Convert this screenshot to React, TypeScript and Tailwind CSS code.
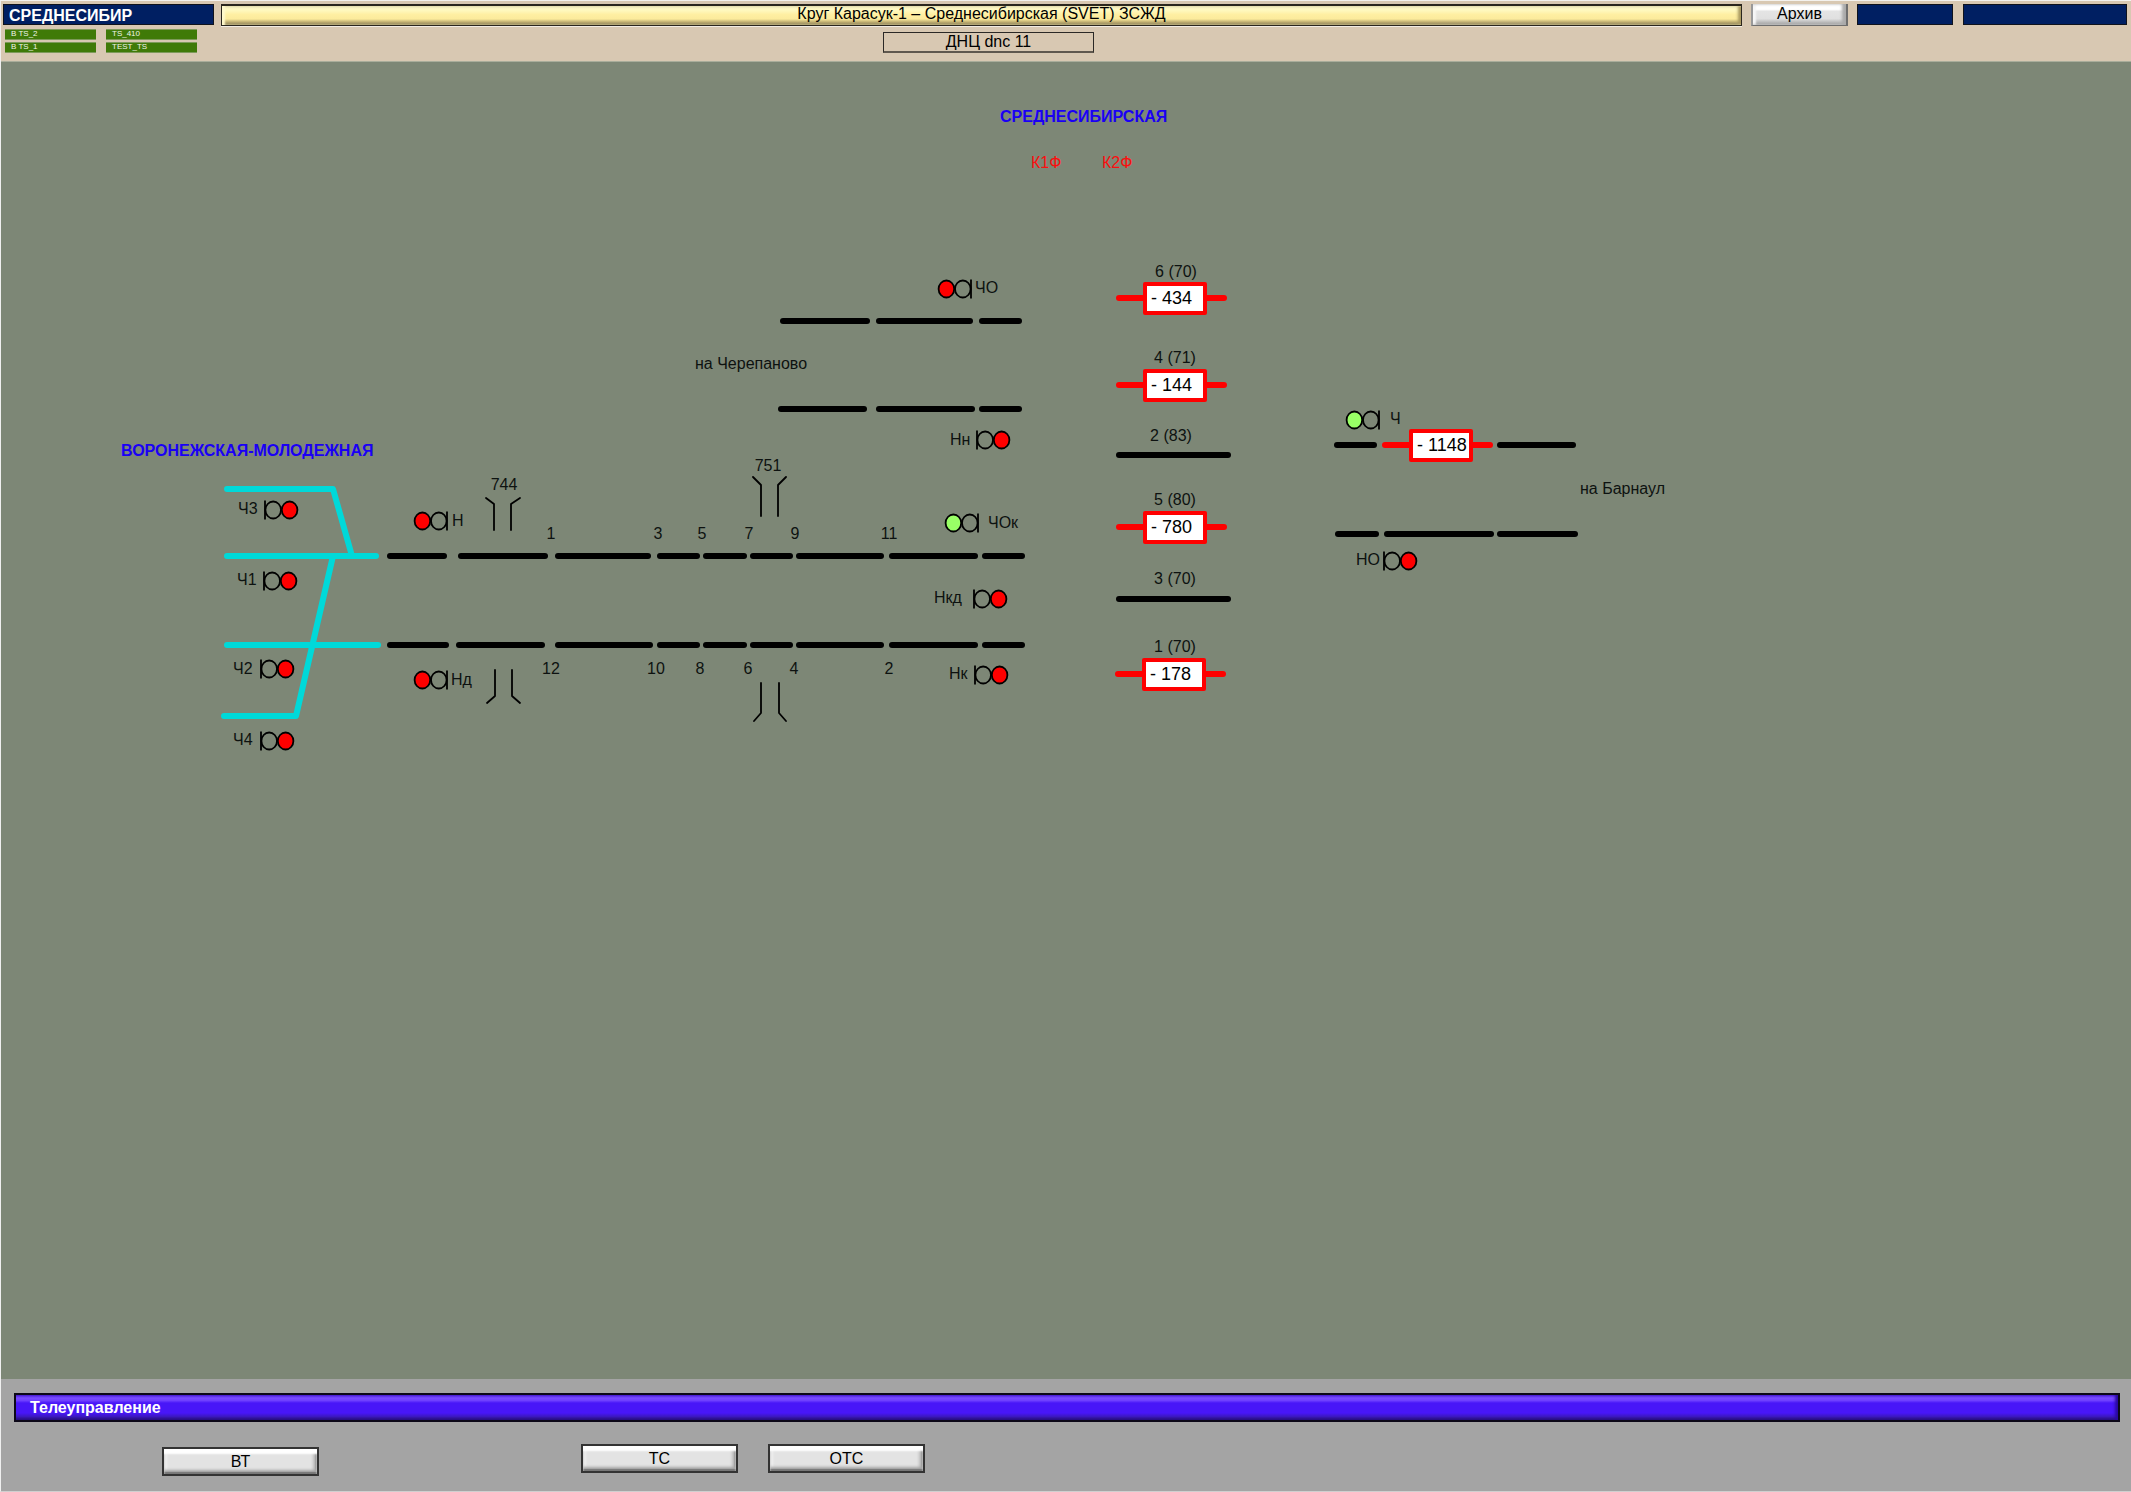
type Point = [number, number];

const RED = '#ff0000';
const GREEN = '#99ff66';
const CYAN = '#00d9d9';

/* Track sections: left end, right end, centre line */
const sections: [number, number, number][] = [
  [387, 447, 556], [458, 548, 556], [555, 651, 556], [657, 700, 556], [703, 747, 556],
  [750, 793, 556], [796, 884, 556], [889, 978, 556], [982, 1025, 556],
  [387, 449, 645], [456, 545, 645], [555, 653, 645], [657, 700, 645], [703, 747, 645],
  [750, 793, 645], [796, 884, 645], [889, 978, 645], [982, 1025, 645],
  [780, 870, 321], [876, 973, 321], [979, 1022, 321],
  [778, 867, 409], [876, 975, 409], [979, 1022, 409],
  [1116, 1231, 455], [1116, 1231, 599],
  [1334, 1377, 445], [1497, 1576, 445],
  [1335, 1379, 534], [1384, 1494, 534], [1497, 1578, 534],
];

const stationTracks: Point[][] = [
  [[227, 489], [333, 489], [352, 556]],
  [[227, 556], [376, 556]],
  [[227, 645], [378, 645]],
  [[224, 716], [296, 716], [333, 556]],
];

type SignalData = { name: string; x: number; y: number; side: 1 | -1; lamp: string; tx: number; ty: number };

const signals: SignalData[] = [
  { name: 'Ч3', x: 265, y: 510, side: 1, lamp: RED, tx: 238, ty: 514 },
  { name: 'Ч1', x: 264, y: 581, side: 1, lamp: RED, tx: 237, ty: 585 },
  { name: 'Ч2', x: 261, y: 669, side: 1, lamp: RED, tx: 233, ty: 674 },
  { name: 'Ч4', x: 261, y: 741, side: 1, lamp: RED, tx: 233, ty: 745 },
  { name: 'Н', x: 447, y: 521, side: -1, lamp: RED, tx: 452, ty: 526 },
  { name: 'Нд', x: 447, y: 680, side: -1, lamp: RED, tx: 451, ty: 685 },
  { name: 'ЧО', x: 971, y: 289, side: -1, lamp: RED, tx: 975, ty: 293 },
  { name: 'Нн', x: 977, y: 440, side: 1, lamp: RED, tx: 950, ty: 445 },
  { name: 'ЧОк', x: 978, y: 523, side: -1, lamp: GREEN, tx: 988, ty: 528 },
  { name: 'Нкд', x: 974, y: 599, side: 1, lamp: RED, tx: 934, ty: 603 },
  { name: 'Нк', x: 975, y: 675, side: 1, lamp: RED, tx: 949, ty: 679 },
  { name: 'Ч', x: 1379, y: 420, side: -1, lamp: GREEN, tx: 1390, ty: 424 },
  { name: 'НО', x: 1384, y: 561, side: 1, lamp: RED, tx: 1356, ty: 565 },
];

const trains: { text: string; x: number; y: number }[] = [
  { text: '- 434', x: 1116, y: 298 },
  { text: '- 144', x: 1116, y: 385 },
  { text: '- 780', x: 1116, y: 527 },
  { text: '- 178', x: 1115, y: 674 },
  { text: '- 1148', x: 1382, y: 445 },
];

/* Centred captions: switch numbers, crossings and track capacities */
const captions: [string, number, number][] = [
  ['1', 551, 539], ['3', 658, 539], ['5', 702, 539], ['7', 749, 539], ['9', 795, 539], ['11', 889, 539],
  ['12', 551, 674], ['10', 656, 674], ['8', 700, 674], ['6', 748, 674], ['4', 794, 674], ['2', 889, 674],
  ['744', 504, 490], ['751', 768, 471],
  ['6 (70)', 1176, 277], ['4 (71)', 1175, 363], ['2 (83)', 1171, 441],
  ['5 (80)', 1175, 505], ['3 (70)', 1175, 584], ['1 (70)', 1175, 652],
];

const crossings: Point[][] = [
  [[486, 498], [494, 504], [494, 530]],
  [[520, 498], [511, 504], [511, 530]],
  [[753, 477], [761, 485], [761, 516]],
  [[786, 477], [778, 485], [778, 516]],
  [[495, 670], [495, 696], [487, 703]],
  [[512, 670], [512, 696], [520, 703]],
  [[761, 683], [761, 713], [754, 721]],
  [[779, 683], [779, 713], [786, 721]],
];

const toPoints = (p: Point[]) => p.map((q) => q.join(',')).join(' ');

function Signal({ name, x, y, side, lamp, tx, ty }: SignalData) {
  return (
    <g>
      <g stroke="#000" strokeWidth="1.8">
        <line x1={x} y1={y - 9.5} x2={x} y2={y + 9.5} />
        <ellipse cx={x + side * 8.2} cy={y} rx="7.8" ry="8.5" fill="none" />
        <ellipse cx={x + side * 24.6} cy={y} rx="7.8" ry="8.5" fill={lamp} />
      </g>
      <text x={tx} y={ty}>{name}</text>
    </g>
  );
}

function Train({ text, x, y }: { text: string; x: number; y: number }) {
  return (
    <g>
      <line x1={x + 3} y1={y} x2={x + 108} y2={y} stroke={RED} strokeWidth="6" strokeLinecap="round" />
      <rect x={x + 29} y={y - 14} width="60" height="29" fill="#fff" stroke={RED} strokeWidth="4" strokeLinejoin="round" />
      <text x={x + 35} y={y + 6} className="text-[18px]" fill="#000">{text}</text>
    </g>
  );
}

function Schematic() {
  return (
    <svg viewBox="0 62 1700 700" width="1700" height="700" className="-ml-px block max-w-none shrink-0 text-[16px]" fill="#0d1210" role="img" aria-label="Схема станции Среднесибирская">
      <g fill="none" stroke={CYAN} strokeWidth="6" strokeLinecap="round" strokeLinejoin="round">
        {stationTracks.map((t, i) => <polyline key={i} points={toPoints(t)} />)}
      </g>
      <g stroke="#000" strokeWidth="6" strokeLinecap="round">
        {sections.map(([a, b, y], i) => <line key={i} x1={a + 3} y1={y} x2={b - 3} y2={y} />)}
      </g>
      <g fill="none" stroke="#000" strokeWidth="1.8" strokeLinecap="round" strokeLinejoin="round">
        {crossings.map((c, i) => <polyline key={i} points={toPoints(c)} />)}
      </g>
      {signals.map((s) => <Signal key={s.name} {...s} />)}
      {trains.map((t) => <Train key={t.text} {...t} />)}
      <g textAnchor="middle">
        {captions.map(([t, x, y]) => <text key={t} x={x} y={y}>{t}</text>)}
      </g>
      <text x="695" y="369">на Черепаново</text>
      <text x="1580" y="494">на Барнаул</text>
      <g fill="#1a00f5" className="font-bold">
        <text x="1000" y="122">СРЕДНЕСИБИРСКАЯ</text>
        <text x="121" y="456">ВОРОНЕЖСКАЯ-МОЛОДЕЖНАЯ</text>
      </g>
      <g fill="#fa0f0f">
        <text x="1031" y="168">К1Ф</text>
        <text x="1102" y="168">К2Ф</text>
      </g>
    </svg>
  );
}

function Lamp({ label }: { label: string }) {
  return (
    <div className="h-[11px] w-[91px] border-y border-[#7d9a5a] bg-[#3f7a08] pl-[6px] text-[8px] leading-[8px] text-[#f0f5e8]">
      {label}
    </div>
  );
}

function PanelButton({ label, className }: { label: string; className: string }) {
  return (
    <button
      type="button"
      className={`h-[29px] w-[157px] shrink-0 border-2 border-[#333] bg-[#e3e3e3] text-center text-[16px] leading-[23px] text-black shadow-[inset_0_5px_2px_#ffffff,inset_0_-2px_1px_#777,inset_0_-4px_3px_#a4a4a4,inset_-2px_0_1px_#999,inset_-4px_0_3px_#bbb,inset_3px_0_2px_#f2f2f2] ${className}`}
    >
      {label}
    </button>
  );
}

export default function App() {
  return (
    <div className="flex min-h-screen flex-col overflow-x-hidden border-t border-b border-l border-t-[#f4f2ee] border-b-[#cfcfcf] border-l-[#efefef] bg-[#7d8776] font-['Liberation_Sans',Arial,sans-serif]">
      <header className="h-[61px] border-b border-[#a9ad9b] bg-[#d8c8b2] pl-[2px] pr-[4px] pt-[2px]">
        <div className="flex h-[23px] items-center">
          <div className="h-[21px] w-[211px] border border-[#10131c] bg-[#001f62] pl-[5px] text-[16px] font-bold leading-[22px] text-white">
            СРЕДНЕСИБИР
          </div>
          <h1 className="ml-[7px] h-[22px] flex-1 border border-t-2 border-[#2a261e] bg-[linear-gradient(#fffbd0_0%,#fff8bc_25%,#ffefa2_45%,#fceb9c_68%,#c9b878_82%,#857850_100%)] text-center text-[16px] leading-[16px] text-black shadow-[inset_3px_0_2px_#fff9cc,inset_-3px_0_3px_#a89860,0_1px_0_#f1ece4]">
            Круг Карасук-1 – Среднесибирская (SVET) ЗСЖД
          </h1>
          <button type="button" className="ml-[9px] h-[22px] w-[97px] border-x-2 border-b border-[#6e6e6e] border-l-[#999] bg-[linear-gradient(#ffffff_0%,#ffffff_25%,#e4e4e4_35%,#e0e0e0_70%,#a8a8a8_95%)] pb-px text-center text-[16px] leading-[18px] text-black shadow-[inset_-4px_0_3px_#aaa,inset_3px_0_2px_#f6f6f6]">
            Архив
          </button>
          <div className="ml-[9px] h-[21px] w-[96px] border border-[#10131c] bg-[#001f62]" />
          <div className="ml-[10px] h-[21px] w-[164px] border border-[#10131c] bg-[#001f62]" />
        </div>
        <div className="flex items-start pt-[3px]">
          <div className="grid w-[211px] grid-cols-[91px_91px] gap-x-[10px] gap-y-[2px] pl-[2px]">
            <Lamp label="B TS_2" />
            <Lamp label="TS_410" />
            <Lamp label="B TS_1" />
            <Lamp label="TEST_TS" />
          </div>
          <div className="flex flex-1 justify-center pr-[364px] pt-[3px]">
            <div className="h-[21px] w-[211px] border border-b-2 border-[#2b2926] border-b-[#5f584e] text-center text-[16px] leading-[18px] text-black">
              ДНЦ dnc 11
            </div>
          </div>
        </div>
      </header>

      <main className="flex-1 overflow-hidden">
        <Schematic />
      </main>

      <footer className="bg-[#a4a4a4] pb-[15px] pl-[13px] pr-[11px] pt-[14px]">
        <h2 className="h-[29px] border-2 border-[#0c0818] bg-[linear-gradient(#5a2cf0_0%,#7a4cff_12%,#6f3fff_22%,#4816f8_32%,#4816f8_72%,#3c18c0_86%,#281070_100%)] pl-[14px] text-[16px] font-bold leading-[26px] text-white shadow-[inset_-3px_0_3px_#2a08a0]">
          Телеуправление
        </h2>
        <div className="flex items-start pt-[22px]">
          <PanelButton label="ВТ" className="ml-[148px] mt-[3px]" />
          <PanelButton label="ТС" className="ml-[262px]" />
          <PanelButton label="ОТС" className="ml-[30px]" />
        </div>
      </footer>
    </div>
  );
}
